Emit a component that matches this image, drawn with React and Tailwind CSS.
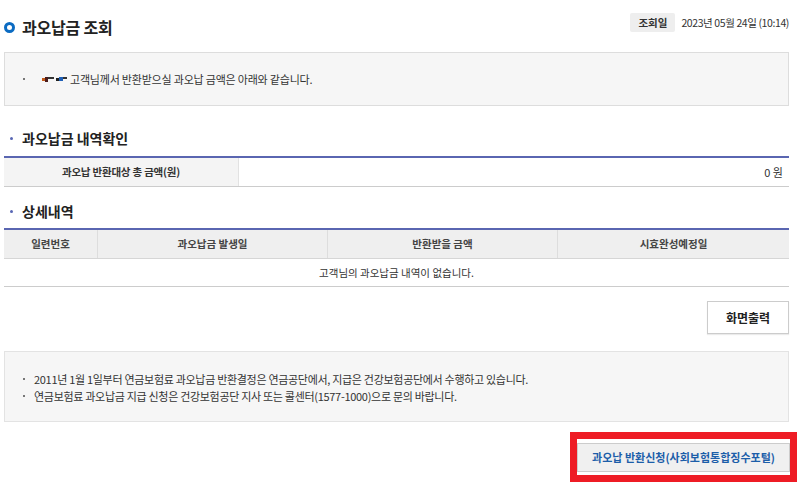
import React from "react";

const F = { fontFamily: '"Noto Sans CJK KR", "Noto Sans", sans-serif' };

export default function App() {
  return (
    <div
      className="w-[800px] h-[485px] bg-white overflow-hidden text-[#333]"
      style={F}
    >
      <div className="pl-[4px] pr-[11px]">
        {/* Header */}
        <div className="h-[52px] flex items-start justify-between">
          <div className="flex items-center mt-[17px]">
            <span className="w-[11px] h-[11px] rounded-full border-[3px] border-[#0b6bc2] mr-[7px]" />
            <span className="text-[16px] leading-[20px] font-bold text-[#222] tracking-[-0.2px]">
              과오납금 조회
            </span>
          </div>
          <div className="flex items-center mt-[13px]">
            <span className="h-[19px] px-[8px] bg-[#eeeeee] text-[10.5px] font-bold text-[#333] flex items-center rounded-[2px]">
              조회일
            </span>
            <span className="ml-[6px] text-[10.5px] text-[#333] tracking-[-0.4px]">
              2023년 05월 24일 (10:14)
            </span>
          </div>
        </div>

        {/* Info box */}
        <div className="h-[54px] bg-[#f6f6f6] border border-[#dddddd] flex items-center pl-[18px]">
          <span className="w-[2px] h-[2px] bg-[#777] mr-[17px]" />
          <span className="flex items-center mr-[3px]">
            <span className="w-[3px] h-[3px] bg-[#c25a1a]" />
            <span className="w-[3px] h-[5px] bg-[#4a1c1c] self-start" />
            <span className="w-[6px] h-[2px] bg-[#333] self-start" />
            <span className="w-[3px] h-[3px] bg-[#222] ml-[2px]" />
            <span className="w-[4px] h-[4px] bg-[#1e5fb6]" />
            <span className="w-[4px] h-[2px] bg-[#333] self-start" />
          </span>
          <span className="text-[11px] text-[#333] tracking-[-0.2px]">
            고객님께서 반환받으실 과오납 금액은 아래와 같습니다.
          </span>
        </div>

        {/* Section 1 */}
        <div className="mt-[23px] flex items-center h-[18px] pl-[6px]">
          <span className="w-[3px] h-[3px] rounded-full bg-[#5867b4] mr-[9px]" />
          <span className="text-[14px] font-bold text-[#222]">과오납금 내역확인</span>
        </div>
        <div className="mt-[9px] border-t-2 border-[#5a66b1] border-b border-b-[#cccccc] flex h-[31px]">
          <div className="w-[235px] bg-[#f4f4f4] border-r border-[#e2e2e2] flex items-center justify-center text-[10.5px] font-bold text-[#333] tracking-[-0.2px]">
            과오납 반환대상 총 금액(원)
          </div>
          <div className="flex-1 flex items-center justify-end pr-[6px] text-[11px] text-[#333]">
            0 원
          </div>
        </div>

        {/* Section 2 */}
        <div className="mt-[15px] flex items-center h-[18px] pl-[6px]">
          <span className="w-[3px] h-[3px] rounded-full bg-[#5867b4] mr-[9px]" />
          <span className="text-[14px] font-bold text-[#222]">상세내역</span>
        </div>
        <div className="mt-[8px] border-t-2 border-[#5a66b1]">
          <div className="grid grid-cols-[94px_230px_230px_1fr] h-[29px] bg-[#efefef] border-b border-[#d6d6d6] text-[10.5px] font-bold text-[#444]">
            <div className="flex items-center justify-center border-r border-[#dddddd]">일련번호</div>
            <div className="flex items-center justify-center border-r border-[#dddddd]">과오납금 발생일</div>
            <div className="flex items-center justify-center border-r border-[#dddddd]">반환받을 금액</div>
            <div className="flex items-center justify-center">시효완성예정일</div>
          </div>
          <div className="h-[28px] border-b border-[#cccccc] flex items-center justify-center text-[10.5px] text-[#333]">
            고객님의 과오납금 내역이 없습니다.
          </div>
        </div>

        {/* Print button */}
        <div className="flex justify-end mt-[14px]">
          <button className="w-[82px] h-[33px] border border-[#cccccc] bg-white text-[12px] font-bold text-[#222] shadow-[0_1px_1px_rgba(0,0,0,0.08)]">
            화면출력
          </button>
        </div>

        {/* Notice */}
        <div className="mt-[17px] h-[71px] bg-[#f6f6f6] border border-[#e3e3e3] flex flex-col justify-center pl-[18px] pt-[2px] gap-0 text-[11px] leading-[17px] text-[#333] tracking-[-0.3px]">
          <div className="flex items-center">
            <span className="w-[2px] h-[2px] bg-[#777] mr-[9px]" />
            2011년 1월 1일부터 연금보험료 과오납금 반환결정은 연금공단에서, 지급은 건강보험공단에서 수행하고 있습니다.
          </div>
          <div className="flex items-center">
            <span className="w-[2px] h-[2px] bg-[#777] mr-[9px]" />
            연금보험료 과오납금 지급 신청은 건강보험공단 지사 또는 콜센터(1577-1000)으로 문의 바랍니다.
          </div>
        </div>

        {/* Bottom button */}
        <div className="flex justify-end mt-[10px] -mr-[8px]">
          <div className="w-[227px] h-[50px] border-[7px] border-[#ee1c25] bg-white pt-[4px] pr-[1px]">
            <button className="w-[213px] h-[29px] bg-[#f0f0f0] border border-[#cccccc] text-[11px] font-bold text-[#1c5ea9]">
              과오납 반환신청(사회보험통합징수포털)
            </button>
          </div>
        </div>
      </div>
    </div>
  );
}
